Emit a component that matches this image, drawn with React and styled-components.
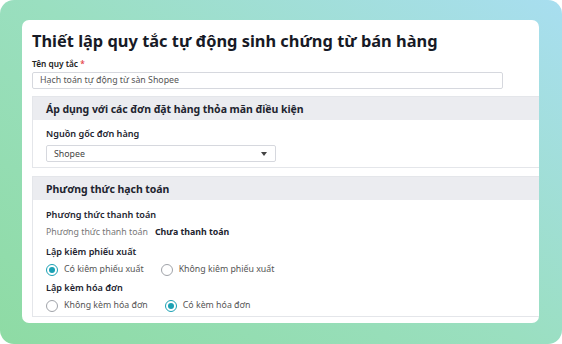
import React from 'react';
import styled, { createGlobalStyle } from 'styled-components';

const GlobalStyle = createGlobalStyle`
  html, body { margin: 0; padding: 0; background: #fff; }
  body { font-family: "Noto Sans", "Open Sans", sans-serif; color: #1d1f2b; }
`;

const Frame = styled.div`
  width: 562px;
  height: 344px;
  box-sizing: border-box;
  border-radius: 14px;
  background: linear-gradient(35deg, #8edba4 0%, #9adfc0 50%, #a8def0 100%);
  padding: 20px 23px 21px 22px;
`;

const Card = styled.div`
  height: 100%;
  box-sizing: border-box;
  background: #fff;
  border-radius: 7px;
  overflow: hidden;
  padding: 9px 0 0 10px;
  display: flex;
  flex-direction: column;
`;

const Title = styled.h1`
  margin: 0;
  font-size: 16.4px;
  font-weight: 700;
  line-height: 24px;
  color: #171a26;
`;

const FieldLabel = styled.div`
  margin-top: 5px;
  font-size: 8.3px;
  font-weight: 600;
  line-height: 12px;
  color: #222;
  span { color: #e5484d; }
`;

const TextInput = styled.div`
  margin-top: 2px;
  width: 471px;
  height: 17px;
  box-sizing: border-box;
  border: 1px solid #d6d8de;
  border-radius: 2px;
  padding: 0 7px;
  font-size: 8.8px;
  line-height: 15px;
  color: #555;
`;

const Section = styled.section`
  margin-top: ${({ $gap }) => $gap}px;
  border: 1px solid #e4e6ea;
  border-right: none;
`;

const SectionHead = styled.div`
  height: 23px;
  background: #ebecf0;
  padding-left: 13px;
  display: flex;
  align-items: center;
  font-size: 10.5px;
  font-weight: 700;
  letter-spacing: -0.05px;
  color: #22242f;
`;

const SectionBody = styled.div`
  padding: ${({ $pad }) => $pad};
  display: flex;
  flex-direction: column;
`;

const SubLabel = styled.div`
  font-size: 9.1px;
  font-weight: 600;
  line-height: 13px;
  color: #22242f;
  margin-top: ${({ $mt }) => $mt || 0}px;
`;

const Select = styled.div`
  margin-top: 5px;
  width: 230px;
  height: 17px;
  box-sizing: border-box;
  border: 1px solid #d6d8de;
  border-radius: 2px;
  padding: 0 8px 0 7px;
  display: flex;
  align-items: center;
  justify-content: space-between;
  font-size: 8.8px;
  color: #444;
`;

const Caret = styled.span`
  width: 0;
  height: 0;
  border-left: 3.5px solid transparent;
  border-right: 3.5px solid transparent;
  border-top: 4px solid #444;
`;

const InfoRow = styled.div`
  margin-top: 5px;
  font-size: 8.8px;
  line-height: 13px;
  color: #777;
  display: flex;
  gap: 7px;
  b { color: #22242f; font-weight: 700; }
`;

const RadioRow = styled.div`
  margin-top: 5px;
  display: flex;
  gap: 17px;
`;

const RadioItem = styled.label`
  display: flex;
  align-items: center;
  gap: 6px;
  font-size: 8.8px;
  line-height: 13px;
  color: #555;
`;

const RadioDot = styled.span`
  width: 12px;
  height: 12px;
  box-sizing: border-box;
  border-radius: 50%;
  border: 1px solid ${({ $on }) => ($on ? '#1aa1b4' : '#a0a3a9')};
  display: flex;
  align-items: center;
  justify-content: center;
  &::after {
    content: '';
    width: 6px;
    height: 6px;
    border-radius: 50%;
    background: ${({ $on }) => ($on ? '#1aa1b4' : 'transparent')};
  }
`;

function Radio({ on, children }) {
  return (
    <RadioItem>
      <RadioDot $on={on} />
      {children}
    </RadioItem>
  );
}

export default function App() {
  return (
    <>
      <GlobalStyle />
      <Frame>
        <Card>
          <Title>Thiết lập quy tắc tự động sinh chứng từ bán hàng</Title>
          <FieldLabel>
            Tên quy tắc <span>*</span>
          </FieldLabel>
          <TextInput>Hạch toán tự động từ sàn Shopee</TextInput>

          <Section $gap={7}>
            <SectionHead>Áp dụng với các đơn đặt hàng thỏa mãn điều kiện</SectionHead>
            <SectionBody $pad="7px 0 5px 13px">
              <SubLabel>Nguồn gốc đơn hàng</SubLabel>
              <Select>
                Shopee
                <Caret />
              </Select>
            </SectionBody>
          </Section>

          <Section $gap={8}>
            <SectionHead>Phương thức hạch toán</SectionHead>
            <SectionBody $pad="8px 0 4px 13px">
              <SubLabel>Phương thức thanh toán</SubLabel>
              <InfoRow>
                <span>Phương thức thanh toán</span>
                <b>Chưa thanh toán</b>
              </InfoRow>
              <SubLabel $mt={6}>Lập kiêm phiếu xuất</SubLabel>
              <RadioRow>
                <Radio on>Có kiêm phiếu xuất</Radio>
                <Radio>Không kiêm phiếu xuất</Radio>
              </RadioRow>
              <SubLabel $mt={5}>Lập kèm hóa đơn</SubLabel>
              <RadioRow>
                <Radio>Không kèm hóa đơn</Radio>
                <Radio on>Có kèm hóa đơn</Radio>
              </RadioRow>
            </SectionBody>
          </Section>
        </Card>
      </Frame>
    </>
  );
}
